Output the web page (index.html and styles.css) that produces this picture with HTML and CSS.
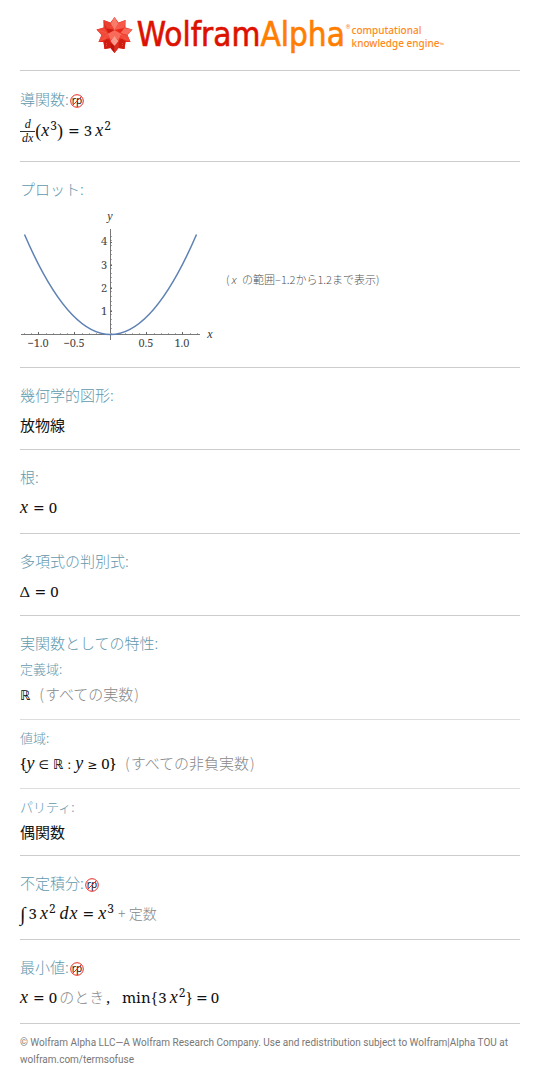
FILE: index.html
```html
<!DOCTYPE html>
<html lang="ja">
<head>
<meta charset="utf-8">
<meta name="viewport" content="width=device-width, initial-scale=1">
<title>WolframAlpha</title>
<link rel="stylesheet" href="styles.css">
</head>
<body>
<header class="logo">
  <svg class="spikey" viewBox="0 0 36 38" role="img" aria-label="Wolfram">
    <path fill="#e8291a" d="M18 1 22 6.500 29 4 29 11.500 36 13.500 31 19 34 26 29 26 28 33 22 32 18 37 14 32 8 33 7 26 2 26 5 19 0 13.500 7 11.500 7 4 14 6.500Z"/>
    <path fill="#fa7a69" d="M18 1 22 8 18 14 14 8Z"/>
    <path fill="#ea4030" d="M7 4 14 7 18 14 8 12Z"/>
    <path fill="#f4594a" d="M29 4 22 7 18 14 28 12Z"/>
    <path fill="#f86a5a" d="M36 13.500 28 12 24 17 31 19ZM11 18 18 14 25 18 22 24 18 21 14 24Z"/>
    <path fill="#cf1d12" d="M7 5 9 12 18 14 12 17ZM29 26 25 22 22 26 22 32 28 33ZM7 26 11 22 14 26 14 32 8 33Z"/>
    <path fill="#f04a3a" d="M0 13.500 8 12 11 17 5 19ZM5 19 11 17 13 22 2 26ZM31 19 25 18 23 22 34 26Z"/>
    <path fill="#fb9b8e" d="M18 20 22 25 18 30 14 25Z"/>
    <path fill="#b9140e" d="M14 27 18 30 18 37 14 32Z"/>
    <path fill="#d93024" d="M22 27 18 30 18 37 22 32Z"/>
    <path fill="none" stroke="#f98070" stroke-width=".5" stroke-dasharray="1 1" d="M18 2V14M22 10 18 14 14 10M3 15 11 17M33 15 25 18M12 18 5 25M24 18 31 25M10 27 10 31M26 27V31"/>
  </svg>
  <span class="brand">Wolfram<b>Alpha</b></span>
  <sup class="reg">®</sup>
  <span class="tagline">computational<br>knowledge engine<small>™</small></span>
</header>
<main>
  <section class="pod tall">
    <h2>導関数:<svg class="rp" viewBox="0 0 14 14" aria-hidden="true"><text x="7" y="10" text-anchor="middle">rp</text><circle cx="7" cy="7" r="6.300"/><path d="M2.600 11.400 11.400 2.600"/></svg></h2>
    <p class="math"><span class="frac"><i>d</i><i>dx</i></span><span class="paren">(</span><i>x</i><sup>3</sup><span class="paren">)</span><span class="op">=</span>3<i class="thin">x</i><sup>2</sup></p>
  </section>
  <section class="pod">
    <h2>プロット:</h2>
    <div class="plot-row">
      <svg class="plot" viewBox="20 206 200 146" role="img" aria-label="3x² のプロット">
        <g fill="none" stroke="#666" stroke-width="1" shape-rendering="crispEdges">
          <path d="M21 334.500H200M110.500 229V340" stroke="#777"/>
          <path stroke="#aaa" stroke-dasharray="1 6.200" d="M24 333.500H198"/>
          <path stroke="#aaa" stroke-dasharray="1 3.630" d="M111.500 334V232"/>
          <path d="M38.500 332V335M74.500 332V335M146.500 332V335M182.500 332V335M110 311.500H112M110 288.500H112M110 265.500H112M110 242.500H112"/>
        </g>
        <path fill="none" stroke="#5e81b5" stroke-width="1.500" d="M24.500 234.500Q110.500 434.500 196.500 234.500"/>
        <g class="ticks" text-anchor="middle">
          <text x="38" y="347">−1.0</text><text x="74" y="347">−0.5</text><text x="146" y="347">0.5</text><text x="182" y="347">1.0</text>
          <text x="104" y="315">1</text><text x="104" y="292">2</text><text x="104" y="269">3</text><text x="104" y="245">4</text>
        </g>
        <g class="axis" text-anchor="middle"><text x="110" y="220">y</text><text x="210" y="338">x</text></g>
      </svg>
      <p class="range">(<i>x</i> の範囲–1.2から1.2まで表示)</p>
    </div>
  </section>
  <section class="pod"><h2>幾何学的図形:</h2><p class="word">放物線</p></section>
  <section class="pod roomy"><h2>根:</h2><p class="math"><i>x</i><span class="op">=</span>0</p></section>
  <section class="pod"><h2>多項式の判別式:</h2><p class="math">Δ<span class="op">=</span>0</p></section>
  <section class="pod props">
    <h2>実関数としての特性:</h2>
    <h3>定義域:</h3>
    <p class="math"><span class="set">ℝ</span> <span class="note"><span class="bracket">(</span>すべての実数<span class="bracket">)</span></span></p>
  </section>
  <section class="subpod">
    <h3>値域:</h3>
    <p class="math">{<i>y</i><span class="rel">∈</span><span class="set">ℝ</span><span class="rel">:</span><i>y</i><span class="rel">≥</span>0} <span class="note"><span class="bracket">(</span>すべての非負実数<span class="bracket">)</span></span></p>
  </section>
  <section class="subpod last"><h3>パリティ:</h3><p class="word">偶関数</p></section>
  <section class="pod roomy">
    <h2>不定積分:<svg class="rp" viewBox="0 0 14 14" aria-hidden="true"><text x="7" y="10" text-anchor="middle">rp</text><circle cx="7" cy="7" r="6.300"/><path d="M2.600 11.400 11.400 2.600"/></svg></h2>
    <p class="math"><span class="int">∫</span>3<i class="thin">x</i><sup>2</sup><i class="diff">d</i><i>x</i><span class="op">=</span><i>x</i><sup>3</sup><span class="const">+ 定数</span></p>
  </section>
  <section class="pod roomy">
    <h2>最小値:<svg class="rp" viewBox="0 0 14 14" aria-hidden="true"><text x="7" y="10" text-anchor="middle">rp</text><circle cx="7" cy="7" r="6.300"/><path d="M2.600 11.400 11.400 2.600"/></svg></h2>
    <p class="math"><i>x</i><span class="op">=</span>0<span class="when">のとき</span>,<span class="min">min</span><span class="brace">{</span>3<i class="thin">x</i><sup>2</sup><span class="brace">}</span><span class="op last-op">=</span>0</p>
  </section>
</main>
<footer>© Wolfram Alpha LLC—A Wolfram Research Company. Use and redistribution subject to Wolfram|Alpha TOU at wolfram.com/termsofuse</footer>
</body>
</html>
```
FILE: styles.css
```css
* { box-sizing: border-box; margin: 0; padding: 0; }
body { background: #fff; padding: 0 20px; color: #111; font-family: "Noto Sans CJK JP", sans-serif; }
.logo { display: flex; justify-content: center; align-items: center; height: 70px; }
.spikey { width: 37px; height: 38px; margin-right: 4px; }
.brand { font: 33px/40px "DejaVu Sans Condensed", Roboto, sans-serif; color: #dd1100; -webkit-text-stroke: 0.6px; padding-right: 1px; }
.brand b { color: #ff7e00; font-weight: inherit; }
.reg { font: 6px/30px Roboto, sans-serif; color: #ff7e00; align-self: flex-start; padding-top: 12px; }
.tagline { font: 10px/13px "Noto Sans", sans-serif; font-weight: 500; color: #ff8a1a; padding: 5px 0 0 1px; white-space: nowrap; }
.tagline small { font-size: 6px; }
.pod { border-top: 1px solid #ccc; padding: 15px 0 7px; }
.pod.roomy { padding-bottom: 9px; }
.pod.tall { padding: 16px 0 11px; }
.pod.tall .math { line-height: 39px; height: 39px; }
h2 { font-size: 15px; line-height: 24px; height: 24px; font-weight: 300; color: #6298ad; display: flex; align-items: center; }
.rp { width: 14px; height: 14px; margin: 4px 0 0 1px; fill: none; stroke: #e8281e; }
.rp text { font: 10px "Noto Sans", sans-serif; fill: #111; stroke: none; }
h3 { font-size: 13px; line-height: 26px; height: 26px; font-weight: 300; color: #6298ad; }
.props h3 { margin-top: 1px; }
.word { font-size: 15px; line-height: 35px; height: 35px; }
.math { font-family: "Noto Serif", "DejaVu Serif", serif; font-size: 15px; line-height: 36px; height: 35px; white-space: nowrap; }
.math sup { font-size: 12px; line-height: 1; vertical-align: 6px; padding-left: 1px; }
.math i { font-family: "Liberation Serif", serif; font-size: 18px; line-height: 1; }
.op, .rel { font-family: "DejaVu Sans", sans-serif; font-size: 14px; line-height: 1; padding: 0 4px; }
.op { padding: 0 4px 0 5px; }
.rel { font-size: 12px; }
.thin { padding-left: 3px; }
.paren, .brace { font-family: "Liberation Serif", serif; font-size: 18px; line-height: 1; vertical-align: -1px; }
.brace { font-size: 16px; }
.frac { display: inline-flex; flex-direction: column; vertical-align: middle; text-align: center; }
.math .frac i { font-size: 12px; line-height: 13px; padding: 0 2px; }
.math .frac i + i { border-top: 1px solid #333; }
.int { font-family: "Liberation Serif", serif; font-size: 20px; line-height: 1; vertical-align: -2px; padding-right: 3px; }
.math .diff { padding: 0 1px 0 4px; }
.set { font-family: "DejaVu Sans", sans-serif; font-size: 13px; color: #000; }
.note, .when { font-family: "Noto Sans CJK JP", sans-serif; font-weight: 300; font-size: 15px; color: #888; }
.note { padding-left: 4px; }
.bracket { padding: 0 1px; }
.when { padding: 0 2px; }
.const { font-family: "Noto Sans CJK JP", sans-serif; font-weight: 300; font-size: 14px; color: #888; padding-left: 4px; }
.min { padding-left: 12px; }
.last-op { padding: 0 3px; }
.props { padding-bottom: 12px; }
.props .math, .subpod .math, .subpod .word { line-height: 23px; height: 24px; }
.subpod { border-top: 1px solid #ddd; padding: 5px 0 13px; }
.subpod.last { padding-bottom: 11px; }
.props .math { height: 25px; }
.plot-row { display: flex; align-items: flex-start; padding-top: 5px; }
.plot { width: 200px; height: 146px; margin-bottom: 8px; }
.ticks { font: 11px "Noto Serif", "Liberation Serif", serif; fill: #444; }
.axis { font: italic 12px "Liberation Serif", serif; fill: #333; }
.range { font-size: 11px; line-height: 18px; font-weight: 300; color: #555; padding: 64px 0 0 6px; }
.range i { font-family: "Noto Sans", sans-serif; padding: 0 3px 0 2px; }
footer { border-top: 1px solid #ccc; padding-top: 10px; font: 10px/17px Roboto, sans-serif; color: #777; }
```
